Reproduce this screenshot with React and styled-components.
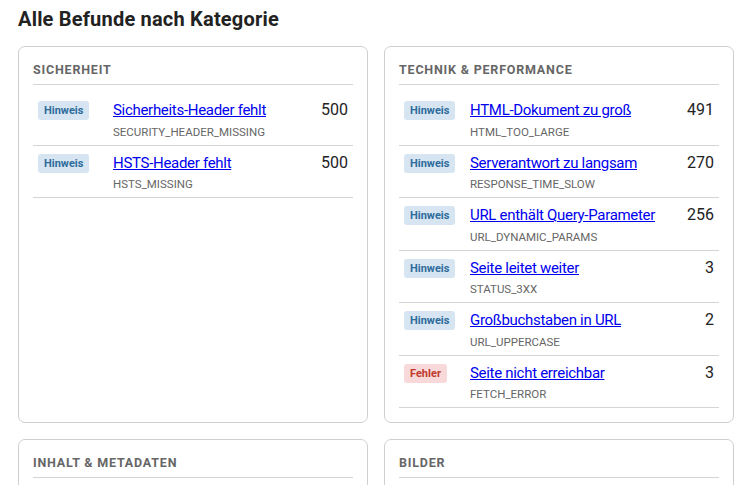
import React from "react";
import styled, { createGlobalStyle } from "styled-components";

const GlobalStyle = createGlobalStyle`
  body {
    margin: 0;
    background: #fff;
    font-family: Roboto, "Noto Sans", sans-serif;
    color: #222;
  }
`;

const Page = styled.div`
  padding: 7px 18px 18px;
`;

const Title = styled.h2`
  margin: 0 0 15px;
  font-size: 20px;
  line-height: 24px;
  font-weight: 700;
  letter-spacing: 0.2px;
  color: #222;
`;

const Grid = styled.div`
  display: grid;
  grid-template-columns: 1fr 1fr;
  gap: 16px;
`;

const Card = styled.section`
  border: 1px solid #cfcfcf;
  border-radius: 7px;
  padding: 14px;
`;

const CardTitle = styled.h3`
  margin: 0 0 8px;
  padding: 2px 0 7px;
  font-size: 12.5px;
  line-height: 14px;
  font-weight: 700;
  letter-spacing: 0.8px;
  text-transform: uppercase;
  color: #666;
  border-bottom: 1px solid #d4d4d4;
`;

const Row = styled.div`
  display: grid;
  grid-template-columns: ${p => p.$badgeCol}px 1fr auto;
  column-gap: 10px;
  align-items: start;
  padding: 8px 5px 6px;
  border-bottom: 1px solid #d4d4d4;
`;

const Badge = styled.span`
  justify-self: start;
  padding: 2px 6px;
  border-radius: 3px;
  font-size: 11px;
  line-height: 15px;
  font-weight: 700;
  background: ${p => (p.$kind === "error" ? "#f6d9d8" : "#d6e5f1")};
  color: ${p => (p.$kind === "error" ? "#c0392b" : "#2e6c9c")};
`;

const Info = styled.div`
  display: flex;
  flex-direction: column;
  align-items: flex-start;
  gap: 5.5px;
`;

const Link = styled.a`
  font-size: 15px;
  line-height: 18px;
  letter-spacing: -0.3px;
  color: #0000ee;
  text-decoration: underline;
`;

const Code = styled.span`
  font-size: 11.5px;
  line-height: 14px;
  color: #666;
`;

const Count = styled.span`
  font-size: 16px;
  line-height: 18px;
  color: #222;
  text-align: right;
`;

const categories = [
  {
    name: "Sicherheit",
    badgeCol: 65,
    items: [
      { kind: "info", title: "Sicherheits-Header fehlt", code: "SECURITY_HEADER_MISSING", count: 500 },
      { kind: "info", title: "HSTS-Header fehlt", code: "HSTS_MISSING", count: 500 },
    ],
  },
  {
    name: "Technik & Performance",
    badgeCol: 56,
    items: [
      { kind: "info", title: "HTML-Dokument zu groß", code: "HTML_TOO_LARGE", count: 491 },
      { kind: "info", title: "Serverantwort zu langsam", code: "RESPONSE_TIME_SLOW", count: 270 },
      { kind: "info", title: "URL enthält Query-Parameter", code: "URL_DYNAMIC_PARAMS", count: 256 },
      { kind: "info", title: "Seite leitet weiter", code: "STATUS_3XX", count: 3 },
      { kind: "info", title: "Großbuchstaben in URL", code: "URL_UPPERCASE", count: 2 },
      { kind: "error", title: "Seite nicht erreichbar", code: "FETCH_ERROR", count: 3 },
    ],
  },
  { name: "Inhalt & Metadaten", badgeCol: 60, items: [] },
  { name: "Bilder", badgeCol: 60, items: [] },
];

export default function App() {
  return (
    <Page>
      <GlobalStyle />
      <Title>Alle Befunde nach Kategorie</Title>
      <Grid>
        {categories.map(cat => (
          <Card key={cat.name}>
            <CardTitle>{cat.name}</CardTitle>
            {cat.items.map(item => (
              <Row key={item.code} $badgeCol={cat.badgeCol}>
                <Badge $kind={item.kind}>{item.kind === "error" ? "Fehler" : "Hinweis"}</Badge>
                <Info>
                  <Link href="#">{item.title}</Link>
                  <Code>{item.code}</Code>
                </Info>
                <Count>{item.count}</Count>
              </Row>
            ))}
          </Card>
        ))}
      </Grid>
    </Page>
  );
}
